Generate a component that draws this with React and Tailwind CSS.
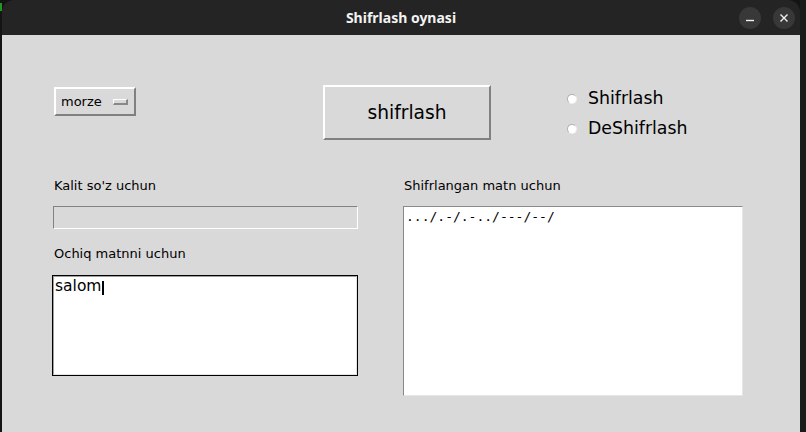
export default function App() {
    return (
        <div className="w-[806px] h-[432px] bg-[#141414] flex overflow-hidden">
            {/* desktop behind the window */}
            <div className="w-[2px] shrink-0 flex flex-col">
                <div className="h-[3px]" />
                <div className="h-[8px] bg-[#1f9a1f]" />
            </div>

            {/* Window */}
            <div className="w-[798px] shrink-0 flex flex-col rounded-t-[12px] overflow-hidden">
                {/* Title bar */}
                <div className="h-[35px] shrink-0 bg-[#242424] grid grid-cols-[1fr_auto_1fr] items-center">
                    <div />
                    <div className="text-[14px] font-bold text-[#f2f2f2] font-['Noto_Sans',sans-serif] pb-[1px]">
                        Shifrlash oynasi
                    </div>
                    <div className="flex justify-end gap-[12px] pr-[5px]">
                        <WinButton>
                            <svg width="10" height="10" viewBox="0 0 10 10">
                                <line x1="1" y1="7.5" x2="9" y2="7.5" stroke="#f0f0f0" strokeWidth="1.4" />
                            </svg>
                        </WinButton>
                        <WinButton>
                            <svg width="10" height="10" viewBox="0 0 10 10">
                                <path d="M1.5 1.5 L8.5 8.5 M8.5 1.5 L1.5 8.5" stroke="#f0f0f0" strokeWidth="1.4" />
                            </svg>
                        </WinButton>
                    </div>
                </div>

                {/* Content */}
                <div className="flex-1 bg-[#d9d9d9] font-['DejaVu_Sans',sans-serif] text-black pt-[50px] pl-[50px]">
                    {/* Top row */}
                    <div className="flex items-start">
                        <div className="mt-[2px] ml-[2px] w-[82px] h-[29px] border-2 border-t-white border-l-white border-r-[#808080] border-b-[#808080] flex items-center pl-[5px]">
                            <span className="text-[13px] leading-none">morze</span>
                            <span className="ml-auto mr-[6px] w-[15px] h-[6px] border-t border-l border-t-white border-l-white border-b-2 border-r-2 border-b-[#888] border-r-[#888] bg-[#d9d9d9]" />
                        </div>

                        <button className="ml-[187px] w-[168px] h-[55px] border-2 border-t-white border-l-white border-r-[#808080] border-b-[#808080] text-[18.67px] flex items-center justify-center">
                            shifrlash
                        </button>

                        <div className="ml-[76px] -mt-[1px] flex flex-col">
                            <Radio label="Shifrlash" />
                            <Radio label="DeShifrlash" />
                        </div>
                    </div>

                    {/* Fields */}
                    <div className="flex mt-[33px]">
                        <div className="w-[306px] flex flex-col">
                            <div className="pl-[2px] text-[13px] leading-[18px] h-[18px]">Kalit so'z uchun</div>
                            <div className="mt-[11px] ml-[1px] w-[305px] h-[23px] border border-t-[#828282] border-l-[#828282] border-r-white border-b-white bg-[#d9d9d9]" />
                            <div className="mt-[16px] pl-[2px] text-[13px] leading-[18px] h-[18px]">Ochiq matnni uchun</div>
                            <div className="mt-[12px] w-[306px] h-[101px] border border-black">
                                <div className="h-full border border-t-[#a0a0a0] border-l-[#a0a0a0] border-r-[#e4e4e4] border-b-[#e4e4e4] bg-white pl-[1px]">
                                    <div className="text-[15.5px] leading-[19px]">
                                        salom
                                        <span className="inline-block w-[2px] h-[14px] bg-black align-[-4px] ml-[1px]" />
                                    </div>
                                </div>
                            </div>
                        </div>

                        <div className="ml-[45px] flex flex-col">
                            <div className="pl-[1px] text-[13px] leading-[18px] h-[18px]">Shifrlangan matn uchun</div>
                            <div className="mt-[11px] w-[340px] h-[190px] border border-t-[#8a8a8a] border-l-[#8a8a8a] border-r-[#e6e6e6] border-b-[#e6e6e6] bg-white pt-[2px] pl-[2px]">
                                <div className="font-['DejaVu_Sans_Mono',monospace] text-[13px] leading-[15px]">
                                    .../.-/.-../---/--/
                                </div>
                            </div>
                        </div>
                    </div>
                </div>
            </div>

            <div className="flex-1 bg-[#1a1a1a]" />
        </div>
    );
}

function WinButton({ children }) {
    return (
        <div className="w-[22px] h-[22px] rounded-full bg-[#383838] flex items-center justify-center">
            {children}
        </div>
    );
}

function Radio({ label }) {
    return (
        <div className="h-[30px] flex items-center">
            <span className="w-[10px] h-[10px] rounded-full bg-white border border-t-[#b0b0b0] border-l-[#b0b0b0] border-r-[#eeeeee] border-b-[#eeeeee]" />
            <span className="ml-[11px] text-[17.33px] leading-none">{label}</span>
        </div>
    );
}
